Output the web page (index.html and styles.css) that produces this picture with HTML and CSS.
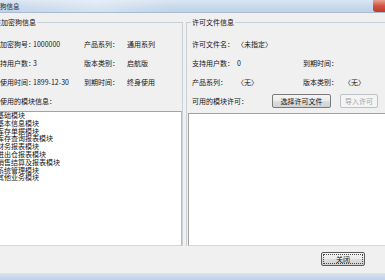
FILE: index.html
```html
<!DOCTYPE html>
<html lang="zh-CN">
<head>
<meta charset="utf-8">
<title>加密狗信息</title>
<link rel="stylesheet" href="styles.css">
</head>
<body>
<div class="app">
  <div class="titlebar">
    <span class="title">加密狗信息</span>
    <span class="close-x"></span>
  </div>
  <div class="panels">
    <fieldset class="group left">
      <legend>该加密狗信息</legend>
      <div class="rows">
        <div class="row"><span class="c1">该加密狗号：</span><span class="c2">1000000</span><span class="c3">产品系列：</span><span>通用系列</span></div>
        <div class="row"><span class="c1">支持用户数：</span><span class="c2">3</span><span class="c3">版本类别：</span><span>启航版</span></div>
        <div class="row"><span class="c1">已使用时间：</span><span class="c2">1899-12-30</span><span class="c3">到期时间：</span><span>终身使用</span></div>
        <div class="row"><span>可使用的模块信息：</span></div>
      </div>
      <div class="list">
        <div>基础模块</div>
        <div>基本信息模块</div>
        <div>库存单据模块</div>
        <div>库存查询报表模块</div>
        <div>财务报表模块</div>
        <div>进出仓报表模块</div>
        <div>销售结算及报表模块</div>
        <div>系统管理模块</div>
        <div>其他业务模块</div>
      </div>
    </fieldset>
    <fieldset class="group right">
      <legend>许可文件信息</legend>
      <div class="rows">
        <div class="row"><span class="c1">许可文件名：</span><span>〈未指定〉</span></div>
        <div class="row"><span class="c1">支持用户数：</span><span class="c2">0</span><span class="c3">到期时间：</span></div>
        <div class="row"><span class="c1">产品系列：</span><span class="c2">〈无〉</span><span class="c3">版本类别：</span><span>〈无〉</span></div>
        <div class="row"><span class="c4">可用的模块许可：</span><button class="btn pick">选择许可文件</button><button class="btn import" disabled>导入许可</button></div>
      </div>
      <div class="list"></div>
    </fieldset>
  </div>
  <div class="footer">
    <button class="btn default">关闭</button>
  </div>
  <div class="frame-bottom"></div>
</div>
</body>
</html>
```
FILE: styles.css
```css
* { box-sizing: border-box; }
html, body { margin: 0; padding: 0; }
body {
  font-family: "Noto Sans CJK SC", "Liberation Sans", sans-serif;
  font-size: 7px;
  color: #151515;
  background: #f0f0f0;
}
.app {
  width: 385px;
  height: 280px;
  overflow: hidden;
  display: flex;
  flex-direction: column;
  background: #f0f0f0;
}
.titlebar {
  height: 13px;
  flex: none;
  display: flex;
  align-items: flex-start;
  background: linear-gradient(90deg, rgba(255,255,255,0) 0%, rgba(255,255,255,0.35) 25%, rgba(255,255,255,0) 45%),
              linear-gradient(180deg, #dbe6f3 0%, #c8d9ec 55%, #bfd2e8 100%);
  border-bottom: 1px solid #a9bccf;
}
.title {
  font-size: 6.5px;
  line-height: 12px;
  margin-left: -13px;
  color: #1c2633;
  white-space: nowrap;
}
.close-x {
  margin-left: auto;
  width: 12px;
  height: 12px;
  background: linear-gradient(180deg, #e8a394 0%, #d0543f 50%, #c23a28 100%);
  border-bottom-left-radius: 3px;
}
.panels {
  height: 233px;
  flex: none;
  display: flex;
  gap: 3px;
  padding-top: 5px;
}
.group {
  margin: 0;
  padding: 0;
  min-width: 0;
  border: 1px solid #c9d0d6;
  border-bottom: none;
  display: flex;
  flex-direction: column;
}
.group.left {
  width: 195px;
  flex: none;
  margin-left: -12px;
}
.group.right {
  width: 215px;
  flex: none;
  border-right: none;
}
legend {
  padding: 0 1px;
  margin-left: 4px;
  font-size: 7px;
  line-height: 8px;
  white-space: nowrap;
}
.rows {
  padding: 8px 0 0 4px;
}
.right .rows { padding-left: 5px; }
.row {
  height: 19px;
  display: flex;
  align-items: center;
  white-space: nowrap;
}
.row span { flex: none; }
.left .c1 { width: 40px; }
.left .c2 { width: 51px; }
.left .c3 { width: 43px; }
.right .c1 { width: 45px; }
.right .c2 { width: 66px; }
.right .c3 { width: 41px; }
.right .c4 { width: 80px; }
.list {
  flex: 1;
  background: #fff;
  border: 1px solid;
  border-color: #a3a3a3 #bdbdbd #d6d6d6 #a3a3a3;
  margin-top: 1px;
  padding-left: 7px;
  line-height: 7.8px;
  overflow: hidden;
  white-space: nowrap;
}
.right .list {
  margin-top: 3px;
  margin-left: 1px;
}
.btn {
  font-family: inherit;
  font-size: 7px;
  height: 14px;
  padding: 0;
  line-height: 12px;
  color: #151515;
  border: 1px solid #7a7a7a;
  border-radius: 2px;
  background: linear-gradient(180deg, #f4f4f4 0%, #ebebeb 48%, #dedede 52%, #d2d2d2 100%);
  flex: none;
}
.btn.pick { width: 59px; }
.btn.import {
  width: 38px;
  margin-left: 9px;
  color: #a6a6a6;
  border-color: #bcc1c5;
  background: #f4f4f4;
}
.footer {
  height: 27px;
  flex: none;
  display: flex;
  justify-content: flex-end;
  align-items: flex-start;
  padding: 6px 20px 0 0;
}
.btn.default {
  width: 44px;
  border-color: #5c5c5c;
  outline: 1px dotted #4a4a4a;
  outline-offset: -3px;
}
.frame-bottom {
  height: 7px;
  flex: none;
  border-top: 1px solid #dfe3e8;
  background: linear-gradient(180deg, #d3e0ef 0%, #bfd2e8 100%);
}
```
